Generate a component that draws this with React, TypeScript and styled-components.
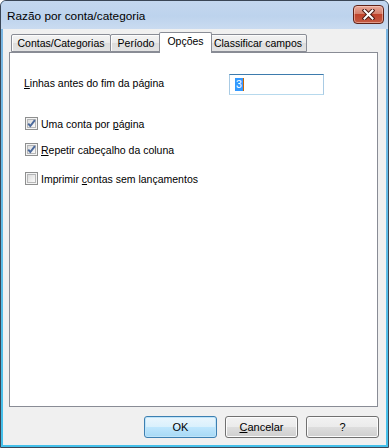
import React from "react";
import styled, { createGlobalStyle } from "styled-components";

const GlobalStyle = createGlobalStyle`
  html, body {
    margin: 0;
    padding: 0;
    background: #ffffff;
  }
  body {
    font-family: "Liberation Sans", Arial, sans-serif;
    font-size: 10.5px;
    color: #000;
  }
`;

const Window = styled.div`
  width: 389px;
  height: 448px;
  box-sizing: border-box;
  border: 1px solid #3a4656;
  border-radius: 6px 6px 0 0;
  background: linear-gradient(to bottom, #7fb6e2, #44c0ea);
  display: flex;
  flex-direction: column;
  overflow: hidden;
`;

const TitleBar = styled.div`
  height: 28px;
  flex: none;
  display: flex;
  align-items: center;
  padding: 0 4px 0 6px;
  background: linear-gradient(to bottom, #c3d7ef 0%, #bdd3ed 55%, #cadbf0 100%);
`;

const Title = styled.div`
  flex: 1;
  font-size: 11.8px;
  padding-top: 1px;
  color: #000;
`;

const CloseButton = styled.div`
  width: 29px;
  height: 17px;
  align-self: flex-start;
  margin-top: 4px;
  border: 1px solid #5e2218;
  border-radius: 4px;
  background: linear-gradient(to bottom, #e9a99a 0%, #d4806c 45%, #c0432b 50%, #c35a43 100%);
  box-shadow: inset 0 0 0 1px rgba(255, 220, 210, 0.5);
  display: flex;
  align-items: center;
  justify-content: center;
`;

const Client = styled.div`
  flex: 1;
  margin: 0 2px 2px;
  background: #f0f0f0;
  display: flex;
  flex-direction: column;
  padding: 3px 7px 7px 6px;
`;

const TabStrip = styled.div`
  display: flex;
  align-items: flex-end;
  height: 21px;
  padding-left: 2px;
  margin-bottom: -1px;
  position: relative;
  z-index: 1;
`;

const Tab = styled.div<{ $w: number; $active?: boolean }>`
  box-sizing: border-box;
  width: ${(p) => p.$w}px;
  height: ${(p) => (p.$active ? 21 : 18)}px;
  margin-left: ${(p) => (p.$active ? -3 : -1)}px;
  margin-right: ${(p) => (p.$active ? -2 : 0)}px;
  margin-bottom: ${(p) => (p.$active ? 0 : 1)}px;
  border: 1px solid #898c95;
  border-bottom: ${(p) => (p.$active ? "none" : "1px solid #898c95")};
  border-radius: 2px 2px 0 0;
  background: ${(p) =>
    p.$active ? "#ffffff" : "linear-gradient(to bottom, #f3f3f3 0%, #ebebeb 50%, #dddddd 51%, #e3e3e3 100%)"};
  box-shadow: ${(p) => (p.$active ? "none" : "inset 1px 1px 0 #fcfcfc")};
  position: relative;
  z-index: ${(p) => (p.$active ? 2 : 1)};
  display: flex;
  align-items: center;
  justify-content: center;
  padding-bottom: ${(p) => (p.$active ? 4 : 0)}px;
  white-space: nowrap;

  &:first-child {
    margin-left: 0;
  }
`;

const Panel = styled.div`
  flex: 1;
  margin-right: 1px;
  background: #ffffff;
  border: 1px solid #898c95;
  display: flex;
  flex-direction: column;
  padding: 21px 14px 0;
`;

const FieldRow = styled.div`
  display: flex;
  align-items: center;
  height: 21px;
`;

const FieldLabel = styled.div`
  width: 205px;
  padding-bottom: 3px;
`;

const TextBox = styled.div`
  box-sizing: border-box;
  width: 95px;
  height: 21px;
  border: 1px solid #a9cbe4;
  border-top-color: #3d7bad;
  border-bottom-color: #b7d9ed;
  background: #fff;
  display: flex;
  align-items: center;
  padding-left: 5px;
`;

const Selection = styled.span`
  display: inline-block;
  background: #3399ff;
  color: #fff;
  height: 13px;
  line-height: 13px;
  padding: 0 1px;
  border-right: 1px solid #cc6600;
`;

const CheckRow = styled.label<{ $mt: number }>`
  display: flex;
  align-items: center;
  gap: 3px;
  height: 13px;
  margin-top: ${(p) => p.$mt}px;
  padding-left: 1px;
`;

const Box = styled.span`
  box-sizing: border-box;
  width: 13px;
  height: 13px;
  border: 1px solid #8e8f8f;
  background: #f4f4f4;
  padding: 1px;
  display: flex;
`;

const BoxInner = styled.span`
  flex: 1;
  border: 1px solid #b8b8b8;
  border-top-color: #b2b4b6;
  background: linear-gradient(135deg, #dcdcdc 0%, #eeeeee 60%, #fafafa 100%);
  position: relative;
`;

const Tick = styled.svg`
  position: absolute;
  left: -2px;
  top: -2px;
`;

const ButtonRow = styled.div`
  display: flex;
  justify-content: flex-end;
  gap: 8px;
  margin-top: 9px;
`;

const Button = styled.div<{ $default?: boolean }>`
  box-sizing: border-box;
  width: 73px;
  height: 22px;
  border: 1px solid ${(p) => (p.$default ? "#3c7fb1" : "#707070")};
  border-radius: 3px;
  background: ${(p) =>
    p.$default
      ? "linear-gradient(to bottom, #eaf6fd 0%, #d9f0fc 50%, #bee6fd 51%, #a7d9f5 100%)"
      : "linear-gradient(to bottom, #f2f2f2 0%, #ebebeb 50%, #dddddd 51%, #cfcfcf 100%)"};
  box-shadow: inset 0 0 0 1px ${(p) => (p.$default ? "#bfe4f9" : "#fcfcfc")};
  display: flex;
  align-items: center;
  justify-content: center;
  font-size: 11px;
`;

const Check = ({ checked, children, mt }: { checked?: boolean; children: React.ReactNode; mt: number }) => (
  <CheckRow $mt={mt}>
    <Box>
      <BoxInner>
        {checked && (
          <Tick width="11" height="11" viewBox="0 0 11 11">
            <path d="M2.2 5.6 L4.3 8 L8.9 2.2" fill="none" stroke="#4c6a9c" strokeWidth="2" />
          </Tick>
        )}
      </BoxInner>
    </Box>
    <span>{children}</span>
  </CheckRow>
);

export default function App() {
  return (
    <>
      <GlobalStyle />
      <Window>
        <TitleBar>
          <Title>Razão por conta/categoria</Title>
          <CloseButton>
            <svg width="13" height="11" viewBox="0 0 13 11">
              <path d="M2.5 1.5 L10.5 9.5 M10.5 1.5 L2.5 9.5" stroke="#4a1a14" strokeWidth="4" strokeLinecap="square" />
              <path d="M2.5 1.5 L10.5 9.5 M10.5 1.5 L2.5 9.5" stroke="#ffffff" strokeWidth="2" strokeLinecap="square" />
            </svg>
          </CloseButton>
        </TitleBar>
        <Client>
          <TabStrip>
            <Tab $w={100}>Contas/Categorias</Tab>
            <Tab $w={52}>Período</Tab>
            <Tab $w={53} $active>
              Opções
            </Tab>
            <Tab $w={98}>Classificar campos</Tab>
          </TabStrip>
          <Panel>
            <FieldRow>
              <FieldLabel>
                <u>L</u>inhas antes do fim da página
              </FieldLabel>
              <TextBox>
                <Selection>3</Selection>
              </TextBox>
            </FieldRow>
            <Check checked mt={22}>
              Uma conta por <u>p</u>ágina
            </Check>
            <Check checked mt={13}>
              <u>R</u>epetir cabeçalho da coluna
            </Check>
            <Check mt={16}>
              Imprimir <u>c</u>ontas sem lançamentos
            </Check>
          </Panel>
          <ButtonRow>
            <Button $default>OK</Button>
            <Button>
              <span>
                <u>C</u>ancelar
              </span>
            </Button>
            <Button>?</Button>
          </ButtonRow>
        </Client>
      </Window>
    </>
  );
}
